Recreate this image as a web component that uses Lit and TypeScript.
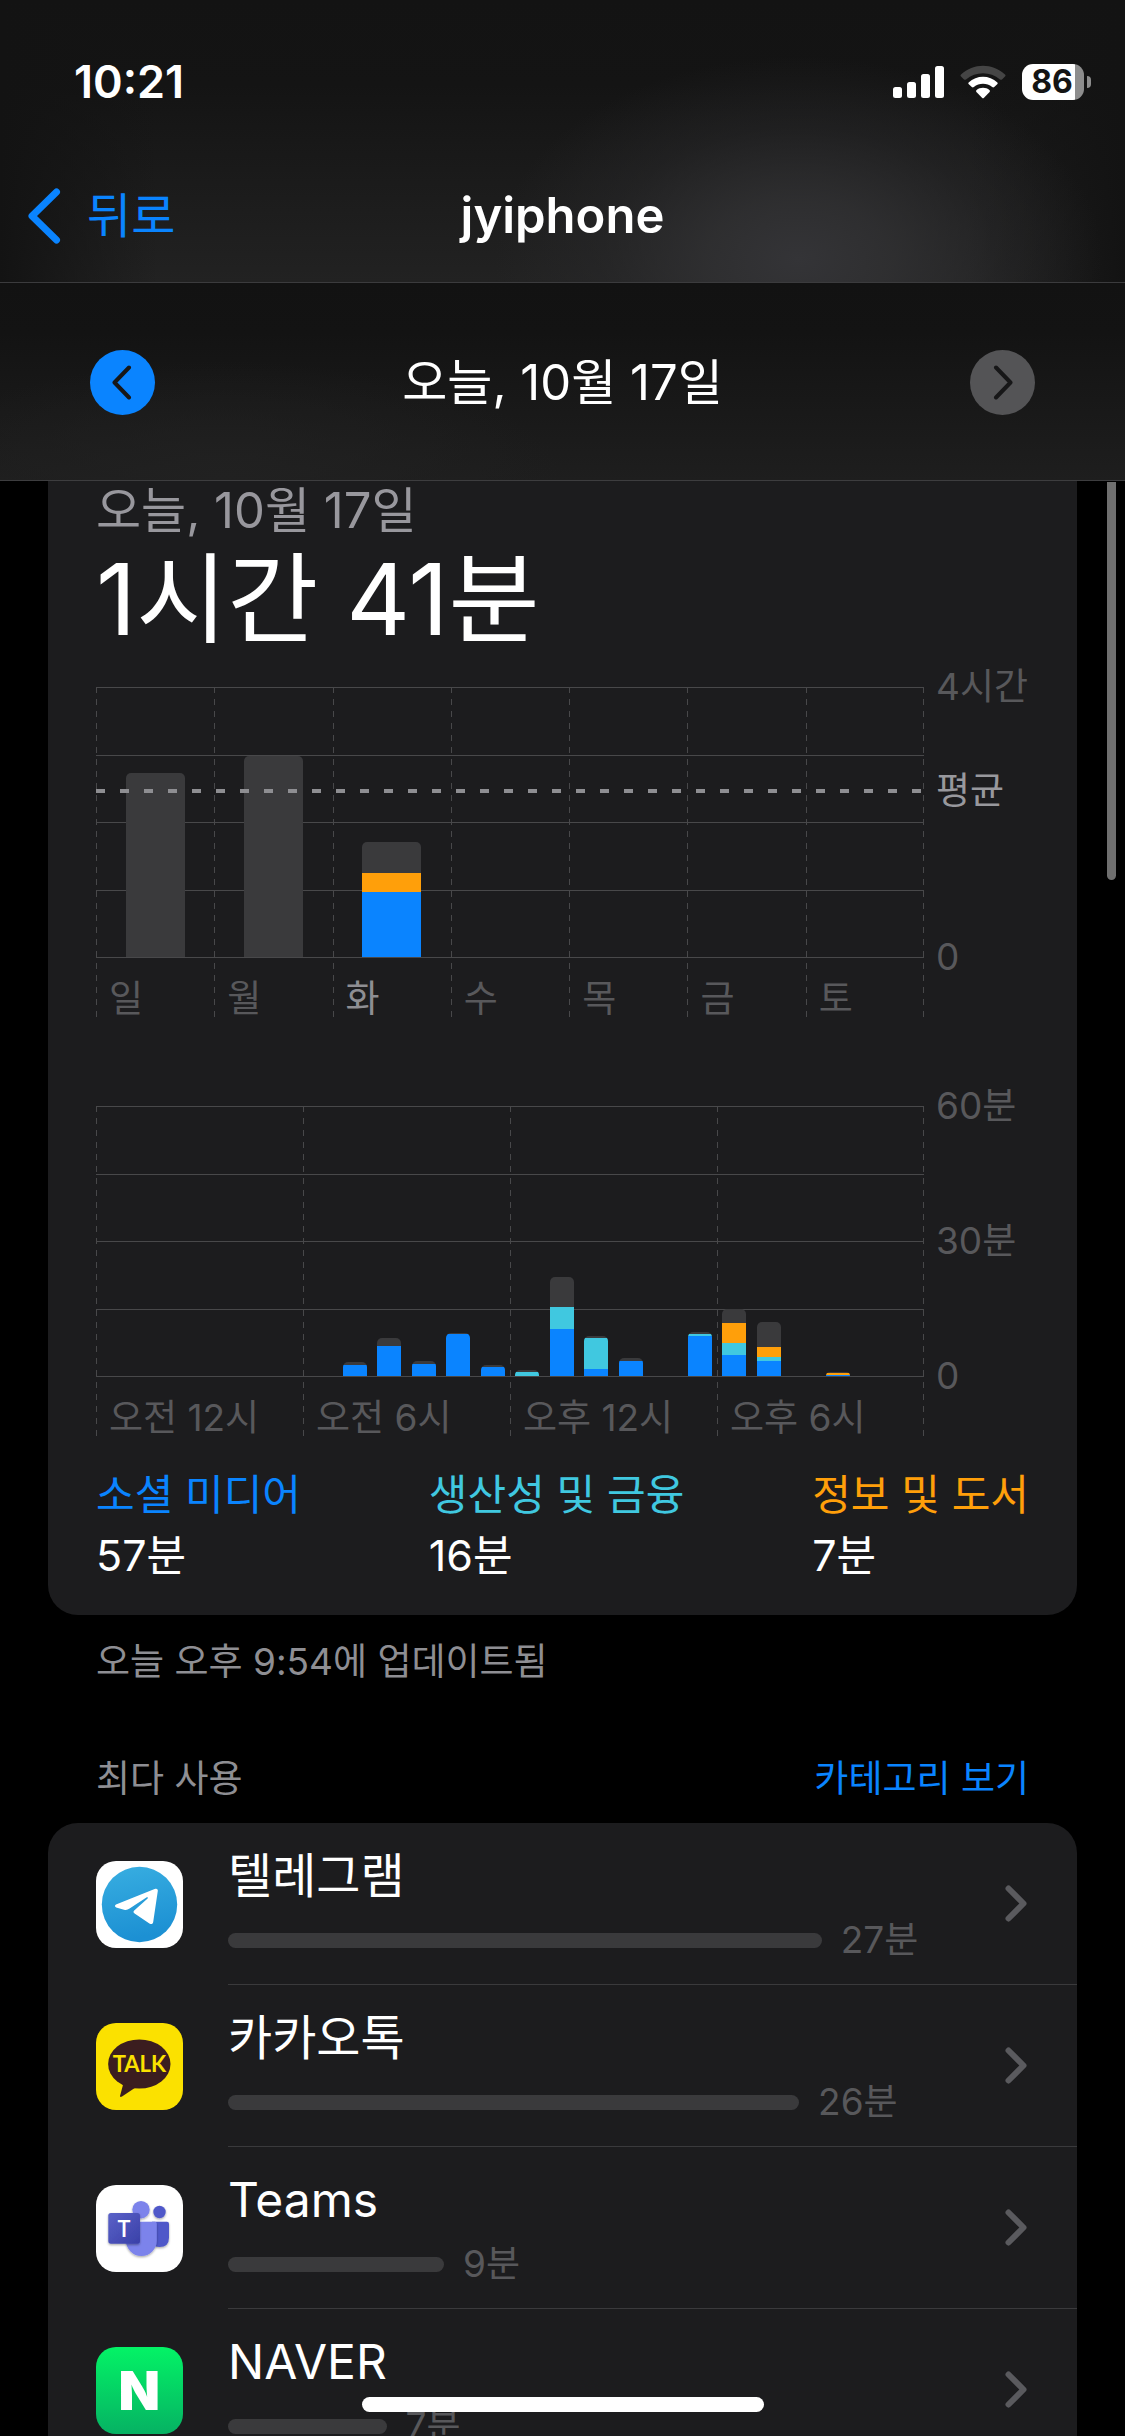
import { LitElement, html, svg, css, nothing } from "lit";
import { customElement, property } from "lit/decorators.js";
import { classMap } from "lit/directives/class-map.js";

type Kind = "social" | "work" | "info" | "other";
interface Segment { kind: Kind; value: number; }
interface Tick { text: string; at: number; strong?: boolean; }
interface Group { label: string; active?: boolean; bars: Segment[][]; }
interface AppUsage { id: string; name: string; minutes: string; share: number; }

const stack = (social = 0, work = 0, info = 0, other = 0): Segment[] =>
  [
    { kind: "other" as Kind, value: other },
    { kind: "info" as Kind, value: info },
    { kind: "work" as Kind, value: work },
    { kind: "social" as Kind, value: social },
  ].filter((s) => s.value > 0);

/* Minutes per day. */
const WEEK: Group[] = [
  { label: "일", bars: [stack(0, 0, 0, 164)] },
  { label: "월", bars: [stack(0, 0, 0, 179)] },
  { label: "화", active: true, bars: [stack(58, 0, 17, 27)] },
  { label: "수", bars: [[]] },
  { label: "목", bars: [[]] },
  { label: "금", bars: [[]] },
  { label: "토", bars: [[]] },
];

/* Seconds per hour. */
const HOURS: Group[] = [
  { label: "오전 12시", bars: [[], [], [], [], [], []] },
  {
    label: "오전 6시",
    bars: [[], stack(147, 0, 0, 40), stack(400, 0, 0, 107), stack(160, 0, 0, 40), stack(560, 0, 0, 14), stack(120, 0, 0, 27)],
  },
  {
    label: "오후 12시",
    bars: [stack(0, 54, 0, 27), stack(627, 293, 0, 400), stack(93, 413, 0, 27), stack(200, 0, 0, 40), [], stack(533, 27, 0, 27)],
  },
  {
    label: "오후 6시",
    bars: [stack(280, 160, 267, 187), stack(200, 53, 133, 333), [], stack(14, 0, 27, 13), [], []],
  },
];

const APPS: AppUsage[] = [
  { id: "telegram", name: "텔레그램", minutes: "27분", share: 76.4 },
  { id: "kakao", name: "카카오톡", minutes: "26분", share: 73.5 },
  { id: "teams", name: "Teams", minutes: "9분", share: 27.8 },
  { id: "naver", name: "NAVER", minutes: "7분", share: 20.4 },
];

@customElement("usage-chart")
export class UsageChart extends LitElement {
  @property({ attribute: false }) groups: Group[] = [];
  @property({ attribute: false }) ticks: Tick[] = [];
  @property({ type: Number }) max = 1;
  @property({ type: Number }) average = 0;
  @property({ type: Boolean, reflect: true }) dense = false;

  static styles = css`
    :host {
      display: grid;
      grid-template-columns: 1fr 105px;
      font-size: 37px;
      line-height: 44px;
      color: #58585b;
    }
    .plot {
      display: grid;
      background: repeating-linear-gradient(#48484a 0 6px, transparent 6px 12px) right / 1px 100% no-repeat;
    }
    .rules, .groups, .average { grid-area: 1 / 1; }
    .rules {
      display: flex;
      flex-direction: column;
      justify-content: space-between;
      height: 271px;
    }
    .rule { height: 1px; background: #48484a; }
    .groups { display: flex; }
    .group {
      flex: 1 1 0;
      min-width: 0;
      background: repeating-linear-gradient(#48484a 0 6px, transparent 6px 12px) left / 1px 100% no-repeat;
    }
    .bars { display: flex; height: 270px; }
    .slot {
      flex: 1 1 0;
      display: flex;
      align-items: flex-end;
      justify-content: center;
    }
    .bar {
      width: 50%;
      display: flex;
      flex-direction: column;
      overflow: hidden;
      border-radius: 5px 5px 0 0;
    }
    :host([dense]) .bar { width: 70%; }
    .seg { min-height: 0; }
    .social { background: #0a84ff; }
    .work { background: #40c8e0; }
    .info { background: #ff9f0a; }
    .other { background: #3a3a3c; }
    .label {
      padding: 21px 0 0 13px;
      height: 39px;
      line-height: 42px;
      white-space: nowrap;
    }
    .active { color: #8e8e93; }
    .average { position: relative; height: 270px; }
    .mean {
      position: absolute;
      left: 0;
      right: 0;
      height: 4px;
      background: repeating-linear-gradient(90deg, #8e8e92 0 9px, transparent 9px 24px);
    }
    .axis { position: relative; height: 270px; }
    .tick {
      position: absolute;
      left: 12px;
      transform: translateY(50%);
      white-space: nowrap;
    }
    .strong { color: #98989d; }
  `;

  render() {
    const pct = (v: number) => `${(v / this.max) * 100}%`;
    const sum = (b: Segment[]) => b.reduce((n, s) => n + s.value, 0);
    return html`
      <div class="plot">
        <div class="rules">${[0, 1, 2, 3, 4].map(() => html`<div class="rule"></div>`)}</div>
        <div class="groups">
          ${this.groups.map(
            (g) => html`<div class="group">
              <div class="bars">
                ${g.bars.map(
                  (b) => html`<div class="slot">${b.length
                    ? html`<div class="bar" style="height:${pct(sum(b))}">${b.map(
                        (s) => html`<div class="seg ${s.kind}" style="flex:${s.value} 1 0"></div>`
                      )}</div>`
                    : nothing}</div>`
                )}
              </div>
              <div class=${classMap({ label: true, active: !!g.active })}>${g.label}</div>
            </div>`
          )}
        </div>
        ${this.average
          ? html`<div class="average"><div class="mean" style="bottom:${pct(this.average)}"></div></div>`
          : nothing}
      </div>
      <div class="axis">
        ${this.ticks.map(
          (t) => html`<span class=${classMap({ tick: true, strong: !!t.strong })} style="bottom:${pct(t.at)}">${t.text}</span>`
        )}
      </div>
    `;
  }
}

const appIcon = (id: string) => {
  const art: Record<string, unknown> = {
    telegram: svg`
      <defs><linearGradient id="tg" x1="0" y1="0" x2="0.2" y2="1"><stop offset="0" stop-color="#38aee1"/><stop offset="1" stop-color="#1c90d3"/></linearGradient></defs>
      <rect width="87" height="87" rx="20" fill="#fff"/>
      <circle cx="43.5" cy="43.5" r="37.7" fill="url(#tg)"/>
      <path fill="#fff" d="M20 43.6 L58.6 28 C61 27.2 62 28.2 61.8 30 L57.2 61 C56.8 63.4 55.2 63.6 53.4 62.4 L38.6 52.6 C37.2 51.6 37.2 50.6 38.2 49.6 L51.6 37.6 C52.4 36.6 51.4 36 50.4 36.6 L33.6 47.6 C31.6 49 30 49.2 28 48.7 L20.2 46.4 C18.6 45.8 18.6 44.4 20 43.6 Z"/>`,
    kakao: svg`
      <rect width="87" height="87" rx="20" fill="#fbe100"/>
      <ellipse cx="43.3" cy="41" rx="31.2" ry="24.6" fill="#3b1d1f"/>
      <path fill="#3b1d1f" d="M27.5 60 L24 73 Q24.2 74.8 26 73.6 L39.5 64.5 Z"/>
      <text x="43.4" y="48.8" text-anchor="middle" font-family="Lato, Inter, sans-serif" font-weight="700" font-size="22" fill="#fbe100">TALK</text>`,
    teams: svg`
      <defs>
        <linearGradient id="tm" x1="0" y1="0" x2="1" y2="1"><stop offset="0" stop-color="#5a62c8"/><stop offset="1" stop-color="#3a40a8"/></linearGradient>
        <filter id="sh" x="-20%" y="-20%" width="140%" height="150%"><feDropShadow dx="0" dy="1.2" stdDeviation="1" flood-color="#000" flood-opacity="0.35"/></filter>
      </defs>
      <rect width="87" height="87" rx="20" fill="#fff"/>
      <g filter="url(#sh)"><circle cx="63.5" cy="27" r="6.2" fill="#5059c9"/>
      <path fill="#5059c9" d="M56 36.7 H71 Q73 36.7 73 38.7 V52.5 Q73 62 63.5 62 Q58 62 56 58 Z"/></g>
      <g filter="url(#sh)"><circle cx="45" cy="24.7" r="8.7" fill="#7b83eb"/>
      <path fill="#7b83eb" d="M30 36.7 H58.8 Q60.8 36.7 60.8 38.7 V55.5 A15.4 15.4 0 0 1 30 55.5 Z"/></g>
      <rect x="12.3" y="28" width="31.7" height="30.7" rx="2.6" fill="url(#tm)" filter="url(#sh)"/>
      <text x="28" y="51.6" text-anchor="middle" font-family="Open Sans, sans-serif" font-weight="600" font-size="23" fill="#fff">T</text>`,
    naver: svg`
      <defs><linearGradient id="nv" x1="0" y1="0" x2="0" y2="1"><stop offset="0" stop-color="#03f366"/><stop offset="1" stop-color="#06b263"/></linearGradient></defs>
      <rect width="87" height="87" rx="20" fill="url(#nv)"/>
      <text x="43.2" y="63" text-anchor="middle" font-family="Inter, sans-serif" font-weight="900" font-size="54" fill="#fff">N</text>`,
  };
  return html`<svg class="app-icon" viewBox="0 0 87 87" aria-hidden="true">${art[id]}</svg>`;
};

@customElement("app-root")
export class AppRoot extends LitElement {
  static styles = css`
    :host {
      display: block;
      font-family: Inter, "Noto Sans CJK KR", sans-serif;
      color: #fff;
    }
    .screen {
      position: relative;
      display: flex;
      flex-direction: column;
      height: 100vh;
      overflow: hidden;
      background: #000;
    }
    button {
      margin: 0;
      padding: 0;
      border: 0;
      background: none;
      font: inherit;
      color: inherit;
    }
    svg { display: block; }

    .top {
      flex: none;
      border-bottom: 1px solid #3b3b3d;
      background:
        radial-gradient(27% 72% at 71% 92%, #343437 0%, #323234cc 30%, #2c2c2e66 65%, #26262800 100%),
        linear-gradient(90deg, #131313 0%, #13131300 14%, #13131300 86%, #131313 100%),
        linear-gradient(#131313 0%, #141414 30%, #222222 100%);
    }
    .status {
      display: flex;
      align-items: center;
      justify-content: space-between;
      height: 36px;
      padding: 64px 34px 0 74px;
    }
    .clock { font-size: 45px; line-height: 36px; font-weight: 600; }
    .indicators { display: flex; align-items: center; gap: 16px; }
    .battery { display: flex; align-items: center; gap: 3px; }
    .cell {
      display: flex;
      align-items: center;
      justify-content: center;
      width: 62px;
      height: 36px;
      box-sizing: border-box;
      padding-right: 2px;
      border-radius: 11px;
      background: linear-gradient(90deg, #fff 86%, #8d8d8d 86%);
      color: #141414;
      font-size: 32px;
      line-height: 36px;
      font-weight: 700;
    }
    .nub { width: 4px; height: 12px; border-radius: 0 6px 6px 0; background: #8d8d8d; }

    .nav {
      display: grid;
      grid-template-columns: 1fr auto 1fr;
      align-items: center;
      height: 132px;
      padding: 50px 27px 0;
    }
    .back {
      justify-self: start;
      display: flex;
      align-items: center;
      gap: 26px;
      color: #0a84ff;
      font-size: 48px;
      line-height: 60px;
    }
    .title { margin: 0; font-size: 49px; line-height: 60px; font-weight: 600; }

    .dates {
      flex: none;
      display: flex;
      align-items: center;
      justify-content: space-between;
      height: 195px;
      padding: 2px 90px 0;
      border-bottom: 1px solid #3d3d3f;
      background:
        radial-gradient(30% 60% at 20% 100%, #212121 0%, #21212100 100%),
        linear-gradient(#121212 0%, #131313 25%, #1e1e1e 100%);
    }
    .date { margin: 0; font-size: 49px; line-height: 60px; font-weight: 400; }
    .step {
      display: flex;
      align-items: center;
      justify-content: center;
      width: 65px;
      height: 65px;
      border-radius: 50%;
      background: #0a84ff;
      color: #171718;
    }
    .step:disabled { background: #545456; }

    .content { flex: 1 1 0; min-height: 0; overflow: hidden; padding: 0 48px; }
    .card { background: #1c1c1e; }
    .summary { padding: 0 48px 30px; border-radius: 0 0 30px 30px; }
    .day { margin: 0; font-size: 49px; line-height: 60px; color: #98979d; }
    .total { margin: 0; padding: 2px 0 32px; font-size: 99px; line-height: 112px; font-weight: 400; }
    .week { margin-bottom: 89px; }
    .legend {
      display: flex;
      justify-content: space-between;
      margin: 0;
      padding-top: 29px;
      font-size: 42px;
      line-height: 60px;
    }
    .legend dd, .legend dt { margin: 0; white-space: nowrap; }
    .legend dd { font-size: 43px; }
    .legend .social { color: #0a84ff; }
    .legend .work { color: #40c8e0; }
    .legend .info { color: #ff9f0a; }

    .note {
      margin: 0;
      padding: 25px 48px 0;
      font-size: 37px;
      line-height: 44px;
      color: #8e8e93;
    }
    .list-head {
      display: flex;
      justify-content: space-between;
      padding: 73px 48px 22px;
      font-size: 37px;
      line-height: 44px;
      color: #8e8e93;
    }
    .list-head h2 { margin: 0; font-size: 37px; font-weight: 400; }
    .link { color: #0a84ff; }

    .apps { margin: 0; padding: 0; list-style: none; border-radius: 30px 30px 0 0; }
    .row {
      display: flex;
      align-items: center;
      padding-left: 48px;
      color: inherit;
      text-decoration: none;
    }
    .app-icon { flex: none; width: 87px; height: 87px; margin-right: 45px; }
    .body {
      flex: 1 1 0;
      min-width: 0;
      display: flex;
      align-items: center;
      height: 161px;
      padding-right: 50px;
      border-bottom: 1px solid #3a3a3c;
    }
    .usage { flex: 1 1 0; min-width: 0; }
    .name { font-size: 48px; line-height: 62px; }
    .meter {
      display: flex;
      align-items: center;
      gap: 19px;
      height: 44px;
      margin-top: 11px;
      font-size: 37px;
      line-height: 44px;
      color: #58585b;
      white-space: nowrap;
    }
    .track { flex: none; height: 15px; border-radius: 8px; background: #3a3a3c; }

    .scroll {
      position: absolute;
      top: 482px;
      right: 9px;
      width: 9px;
      height: 398px;
      border-radius: 0 0 5px 5px;
      background: #6f6f6f;
    }
    .home {
      position: absolute;
      left: 50%;
      bottom: 24px;
      width: 402px;
      height: 15px;
      margin-left: -201px;
      border-radius: 8px;
      background: #fff;
    }
  `;

  render() {
    return html`
      <div class="screen">
        <header class="top">
          <div class="status">
            <span class="clock">10:21</span>
            <div class="indicators">
              <svg width="51" height="32" viewBox="0 0 51 32" fill="#fff" aria-hidden="true">
                <rect x="0" y="21" width="9" height="11" rx="2.5"/><rect x="14" y="16" width="9" height="16" rx="2.5"/>
                <rect x="28" y="8" width="9" height="24" rx="2.5"/><rect x="42" y="0" width="9" height="32" rx="2.5"/>
              </svg>
              <svg width="46" height="34" viewBox="0 0 46 34" aria-hidden="true">
                <path fill="#454545" d="M1 9.6 Q0 10.6 1 11.6 L4 14.4 Q5 15.2 6 14.4 C15.6 6.2 30.4 6.2 40 14.4 Q41 15.2 42 14.4 L45 11.6 Q46 10.6 45 9.6 C32.6 -2.2 13.4 -2.2 1 9.6 Z"/>
                <path fill="#fff" d="M8.6 17.4 Q7.8 18.3 8.8 19.2 L11.8 22 Q12.8 22.8 13.8 22 C19.2 17.6 26.8 17.6 32.2 22 Q33.2 22.8 34.2 22 L37.2 19.2 Q38.2 18.3 37.4 17.4 C29.2 9.8 16.8 9.8 8.6 17.4 Z"/>
                <path fill="#fff" d="M16.4 25.2 Q15.6 26 16.4 26.9 L22 32.7 Q23 33.7 24 32.7 L29.6 26.9 Q30.4 26 29.6 25.2 C26 22 20 22 16.4 25.2 Z"/>
              </svg>
              <div class="battery"><span class="cell">86</span><span class="nub"></span></div>
            </div>
          </div>
          <nav class="nav">
            <button class="back" type="button">
              <svg width="34" height="56" viewBox="0 0 34 56" fill="none" stroke="currentColor" stroke-width="7" stroke-linecap="round" stroke-linejoin="round" aria-hidden="true"><path d="M29.5 4 L5 28 L29.5 52"/></svg>
              뒤로
            </button>
            <h1 class="title">jyiphone</h1>
            <span></span>
          </nav>
        </header>

        <section class="dates">
          <button class="step" type="button" aria-label="이전 날">
            <svg width="22" height="35" viewBox="0 0 22 35" fill="none" stroke="currentColor" stroke-width="4" stroke-linecap="round" stroke-linejoin="round"><path d="M17 2.5 L2.5 17.5 L17 32.5"/></svg>
          </button>
          <p class="date">오늘, 10월 17일</p>
          <button class="step" type="button" aria-label="다음 날" disabled>
            <svg width="22" height="35" viewBox="0 0 22 35" fill="none" stroke="currentColor" stroke-width="4" stroke-linecap="round" stroke-linejoin="round"><path d="M5 2.5 L19.5 17.5 L5 32.5"/></svg>
          </button>
        </section>

        <main class="content">
          <section class="card summary">
            <p class="day">오늘, 10월 17일</p>
            <p class="total">1시간 41분</p>
            <usage-chart
              class="week"
              .groups=${WEEK}
              .max=${240}
              .average=${146}
              .ticks=${[{ text: "4시간", at: 240 }, { text: "평균", at: 148, strong: true }, { text: "0", at: 0 }]}
            ></usage-chart>
            <usage-chart
              dense
              .groups=${HOURS}
              .max=${3600}
              .ticks=${[{ text: "60분", at: 3600 }, { text: "30분", at: 1800 }, { text: "0", at: 0 }]}
            ></usage-chart>
            <dl class="legend">
              <div><dt class="social">소셜 미디어</dt><dd>57분</dd></div>
              <div><dt class="work">생산성 및 금융</dt><dd>16분</dd></div>
              <div><dt class="info">정보 및 도서</dt><dd>7분</dd></div>
            </dl>
          </section>
          <p class="note">오늘 오후 9:54에 업데이트됨</p>

          <div class="list-head">
            <h2>최다 사용</h2>
            <button class="link" type="button">카테고리 보기</button>
          </div>
          <ul class="card apps">
            ${APPS.map(
              (a) => html`<li>
                <a class="row" href="#${a.id}">
                  ${appIcon(a.id)}
                  <div class="body">
                    <div class="usage">
                      <div class="name">${a.name}</div>
                      <div class="meter"><span class="track" style="width:${a.share}%"></span>${a.minutes}</div>
                    </div>
                    <svg width="22" height="37" viewBox="0 0 22 37" fill="none" stroke="#5a5a5e" stroke-width="6" stroke-linecap="round" stroke-linejoin="round" aria-hidden="true"><path d="M3.5 3.5 L18.5 18.5 L3.5 33.5"/></svg>
                  </div>
                </a>
              </li>`
            )}
          </ul>
        </main>
        <div class="scroll"></div>
        <div class="home"></div>
      </div>
    `;
  }
}
